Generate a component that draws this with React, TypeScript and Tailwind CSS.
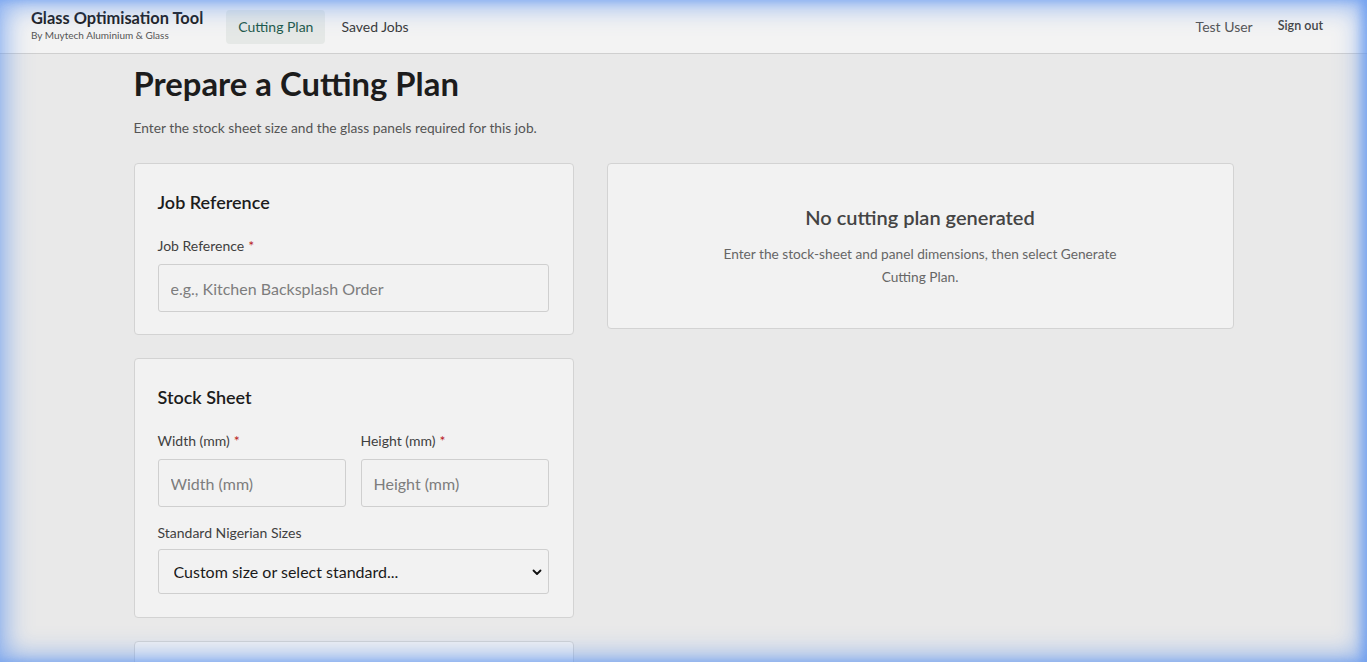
import React from "react";

const font = { fontFamily: '"Lato", "Noto Sans", sans-serif' };

function Label({ children, required, className = "mb-[8px]" }: { children: React.ReactNode; required?: boolean; className?: string }) {
  return (
    <label className={`block text-[14px] leading-[20px] text-[#3f3f3f] ${className}`}>
      {children}
      {required && <span className="text-[#b91c1c] ml-[4px]">*</span>}
    </label>
  );
}

function Card({ title, children, className = "pb-[22px]" }: { title: string; children: React.ReactNode; className?: string }) {
  return (
    <div className={`bg-[#f2f2f2] border border-[#d3d3d3] rounded-[4px] pl-[23px] pr-[24px] pt-[26px] ${className}`}>
      <h2 className="text-[18px] leading-[24px] font-semibold text-[#1c1c1c] mb-[22px]">{title}</h2>
      {children}
    </div>
  );
}

function Input({ placeholder }: { placeholder: string }) {
  return (
    <input
      placeholder={placeholder}
      className="w-full h-[48px] px-[12px] bg-[#f2f2f2] border border-[#cfcfcf] rounded-[3px] text-[16px] text-[#333] placeholder:text-[#7d7d7d] outline-none"
      style={font}
    />
  );
}

export default function App() {
  return (
    <div className="min-h-[662px] bg-[#e9e9e9] text-[#222]" style={font}>
      <header className="h-[54px] bg-[#f3f3f3] border-b border-[#cfcfcf] flex items-center pl-[31px] pr-[44px]">
        <div className="flex flex-col mr-[23px] -mt-[2px]">
          <span className="text-[16.4px] leading-[18px] font-bold text-[#1c1c1c]">Glass Optimisation Tool</span>
          <span className="text-[10px] leading-[13px] mt-[2px] text-[#555]">By Muytech Aluminium &amp; Glass</span>
        </div>
        <nav className="flex items-center gap-[4px]">
          <a className="px-[12px] h-[34px] flex items-center rounded-[4px] bg-[#e5e8e6] text-[#1f5a4b] text-[14px]">Cutting Plan</a>
          <a className="px-[12px] h-[34px] flex items-center text-[#3a3a3a] text-[14px]">Saved Jobs</a>
        </nav>
        <div className="ml-auto flex items-center gap-[25px]">
          <span className="text-[14px] text-[#555]">Test User</span>
          <span className="text-[12.5px] font-semibold text-[#444]">Sign out</span>
        </div>
      </header>

      <main className="max-w-[1100px] mx-auto pt-[10px]">
        <h1 className="text-[32.8px] leading-[40px] font-bold text-[#1c1c1c]">Prepare a Cutting Plan</h1>
        <p className="mt-[14px] text-[13.75px] leading-[20px] text-[#555]">
          Enter the stock sheet size and the glass panels required for this job.
        </p>

        <div className="mt-[25px] grid grid-cols-[440px_1fr] gap-[33px] items-start">
          <div className="flex flex-col gap-[23px]">
            <Card title="Job Reference">
              <Label required>Job Reference</Label>
              <Input placeholder="e.g., Kitchen Backsplash Order" />
            </Card>

            <Card title="Stock Sheet" className="pb-[23px]">
              <div className="grid grid-cols-2 gap-[15px]">
                <div>
                  <Label required>Width (mm)</Label>
                  <Input placeholder="Width (mm)" />
                </div>
                <div>
                  <Label required>Height (mm)</Label>
                  <Input placeholder="Height (mm)" />
                </div>
              </div>
              <div className="mt-[16px]">
                <Label className="mb-[6px]">Standard Nigerian Sizes</Label>
                <div className="relative">
                  <select
                    className="appearance-none w-full h-[45px] pl-[15px] pr-[30px] bg-[#f2f2f2] border border-[#cfcfcf] rounded-[3px] text-[16px] text-[#1a1a1a] outline-none"
                    style={font}
                  >
                    <option>Custom size or select standard...</option>
                  </select>
                  <svg className="absolute right-[6px] top-1/2 -translate-y-1/2 pointer-events-none" width="12" height="12" viewBox="0 0 12 12">
                    <path d="M2.5 4.5 L6 8 L9.5 4.5" fill="none" stroke="#111" strokeWidth="1.8" strokeLinecap="round" strokeLinejoin="round" />
                  </svg>
                </div>
              </div>
            </Card>

            <div className="bg-[#f2f2f2] border border-[#d3d3d3] rounded-[4px] h-[120px]" />
          </div>

          <div className="bg-[#f2f2f2] border border-[#d3d3d3] rounded-[4px] h-[166px] flex flex-col items-center justify-center text-center px-[24px]">
            <h3 className="text-[20px] leading-[26px] font-semibold text-[#444] -mt-[1px]">No cutting plan generated</h3>
            <p className="mt-[12px] max-w-[410px] text-[13.7px] leading-[23px] text-[#666]">
              Enter the stock-sheet and panel dimensions, then select Generate Cutting Plan.
            </p>
          </div>
        </div>
      </main>

      <div className="fixed inset-0 pointer-events-none shadow-[inset_0_0_26px_5px_rgba(90,145,240,0.7),inset_-5px_0_10px_0_rgba(90,145,240,0.55)]" />
    </div>
  );
}
